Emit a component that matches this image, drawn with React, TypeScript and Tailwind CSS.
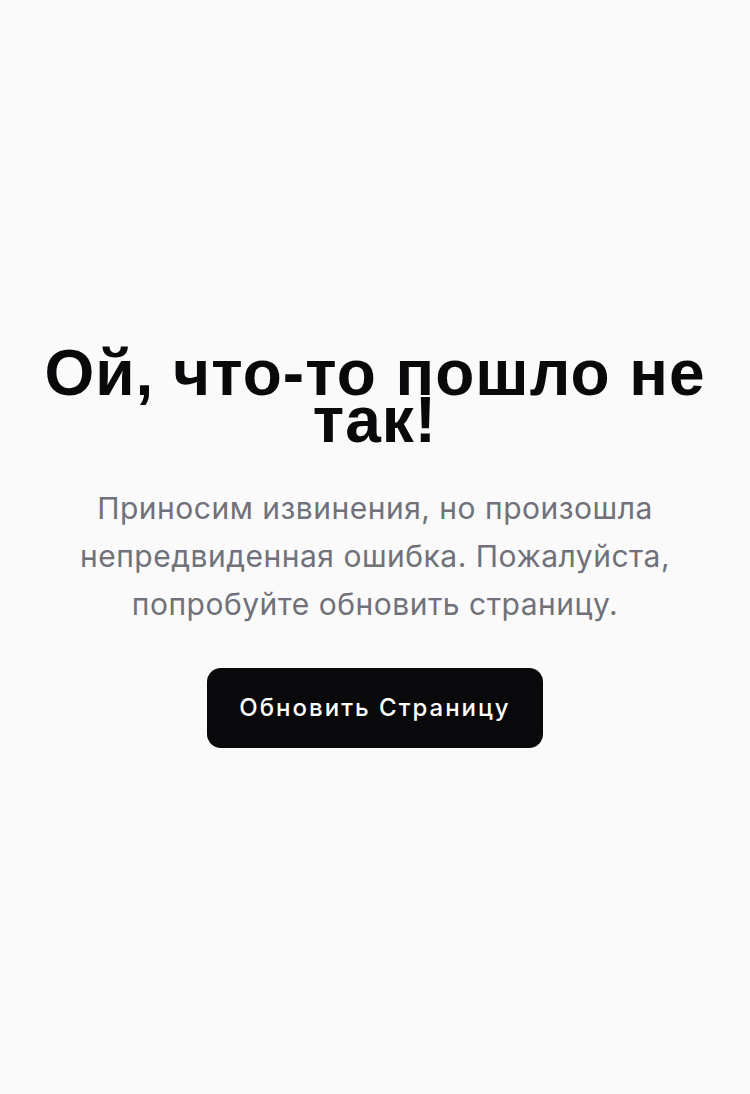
export default function App() {
  return (
    <div className="min-h-screen bg-[#fafafa] flex items-center justify-center px-6 pt-1">
      <div className="flex flex-col items-center text-center">
        <h1 className="font-['Liberation_Sans',Arial,sans-serif] text-[64px] leading-[47px] font-bold text-[#09090b] tracking-[1px]">
          Ой, что-то пошло не так!
        </h1>
        <p className="mt-10 font-['Inter',sans-serif] text-[30px] leading-[48px] text-[#71717a] tracking-[0.5px] max-w-[620px]">
          Приносим извинения, но произошла непредвиденная ошибка. Пожалуйста, попробуйте обновить страницу.
        </p>
        <button className="mt-10 h-[80px] px-8 rounded-[14px] bg-[#09090b] text-white font-['Inter',sans-serif] text-[24px] tracking-[2px] font-medium">
          Обновить Страницу
        </button>
      </div>
    </div>
  );
}
